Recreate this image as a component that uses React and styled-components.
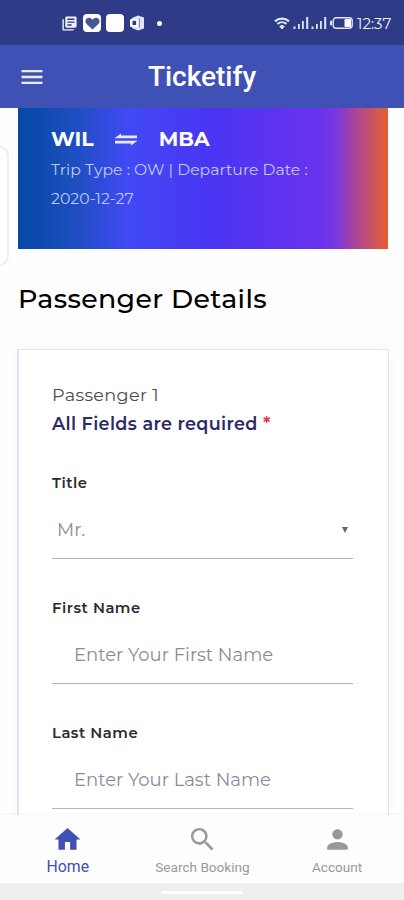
import React from "react";
import styled, { createGlobalStyle, ThemeProvider } from "styled-components";
import {
  MdHome,
  MdSearch,
  MdPerson,
  MdMenu,
  MdLibraryBooks,
} from "react-icons/md";

const theme = {
  colors: {
    statusBar: "#2e3b87",
    primary: "#3f51b5",
    navy: "#2b2968",
    grey: "#999999",
    placeholder: "#8b8b9b",
    cardBorder: "#e4e3f6",
    danger: "#dc3545",
  },
};

const GlobalStyle = createGlobalStyle`
  * {
    box-sizing: border-box;
  }
  body {
    margin: 0;
    background: #fefefe;
    font-family: Montserrat, Inter, sans-serif;
  }
`;

const Screen = styled.div`
  display: flex;
  flex-direction: column;
  width: 404px;
  height: 900px;
  overflow: hidden;
`;

const StatusBar = styled.div`
  display: flex;
  align-items: center;
  justify-content: space-between;
  flex: none;
  height: 45px;
  padding: 1px 12px 0 61px;
  background: ${({ theme }) => theme.colors.statusBar};
  color: #eef0fb;
`;

const StatusGroup = styled.div`
  display: flex;
  align-items: center;
  gap: ${({ $gap }) => $gap};
`;

const Tile = styled.span`
  display: flex;
  align-items: center;
  justify-content: center;
  width: 18px;
  height: 18px;
  border-radius: 4px;
  background: #ffffff;
`;

const Dot = styled.span`
  width: 5px;
  height: 5px;
  margin-left: 7px;
  border-radius: 50%;
  background: #ffffff;
`;

const Clock = styled.span`
  margin-left: 2px;
  width: 35px;
  font-size: 15px;
  white-space: nowrap;
`;

const AppBar = styled.header`
  display: grid;
  grid-template-columns: 64px 1fr 64px;
  align-items: center;
  flex: none;
  height: 63px;
  background: ${({ theme }) => theme.colors.primary};
  color: #ffffff;
`;

const MenuButton = styled.button`
  display: flex;
  justify-content: center;
  padding: 0;
  border: 0;
  background: none;
  color: #eceefb;
`;

const AppTitle = styled.h1`
  margin: 0;
  text-align: center;
  font-family: Roboto, sans-serif;
  font-size: 28px;
  font-weight: 500;
  line-height: 36px;
`;

const Content = styled.main`
  position: relative;
  flex: 1;
  min-height: 0;
  padding: 0 15px 0 17px;
  overflow: hidden;
`;

const SideHandle = styled.div`
  position: absolute;
  left: -20px;
  top: 37px;
  width: 29px;
  height: 122px;
  border: 2px solid #f0f0f0;
  border-radius: 12px;
  background: #ffffff;
`;

const TripBanner = styled.section`
  height: 141px;
  margin: 0 1px;
  padding: 15px 33px 0;
  background: linear-gradient(
    90deg,
    #0648a4 0%,
    #1a4fbc 14%,
    #4149f5 30%,
    #4a35f3 52%,
    #6a32ee 82%,
    #7a38dd 86%,
    #a94599 91%,
    #ca5560 96%,
    #ec5b2c 100%
  );
`;

const Route = styled.div`
  display: flex;
  align-items: center;
  height: 32px;
  padding-bottom: 2px;
  color: #ffffff;
  font-size: 20.5px;
  font-weight: 700;

  svg {
    margin: 3px 21px 0 20px;
  }
`;

const TripInfo = styled.p`
  margin: 0;
  color: #c0c8fa;
  font-size: 15.7px;
  line-height: 29px;
`;

const Heading = styled.h2`
  margin: 31px 0 32px 1px;
  color: #000000;
  font-size: 26.8px;
  font-weight: 500;
  line-height: 37px;
  letter-spacing: 0.35px;
`;

const Card = styled.section`
  height: 500px;
  padding: 30px 35px 0 34px;
  border: 2px solid ${({ theme }) => theme.colors.cardBorder};
  border-top-width: 1px;
  border-right-width: 1px;
  background: #ffffff;
  box-shadow: 0 0 10px rgba(110, 100, 240, 0.05);
`;

const CardLine = styled.p`
  margin: 0 0 0 -1px;
  color: ${({ $strong, theme }) => ($strong ? theme.colors.navy : "#4c4c4c")};
  font-size: 17.6px;
  font-weight: ${({ $strong }) => ($strong ? 600 : 400)};
  line-height: 29px;
  letter-spacing: 0.35px;
`;

const Required = styled.span`
  color: ${({ theme }) => theme.colors.danger};
`;

const Field = styled.label`
  display: block;
  margin: ${({ $first }) => ($first ? "35px" : "39px")} 0 0 -1px;
`;

const FieldLabel = styled.span`
  display: block;
  color: #2b2b2b;
  font-size: 14.8px;
  font-weight: 600;
  line-height: 20px;
  letter-spacing: 0.5px;
`;

const SelectBox = styled.div`
  display: flex;
  align-items: center;
  justify-content: space-between;
  height: 66px;
  padding: 8px 5px 0 5px;
  border-bottom: 1.5px solid #b4b4b4;
  color: ${({ theme }) => theme.colors.placeholder};
  font-size: 18px;
  font-weight: 400;
`;

const Caret = styled.span`
  width: 0;
  height: 0;
  border: 3.5px solid transparent;
  border-top: 6px solid #62627a;
  border-bottom: 0;
`;

const TextInput = styled.input`
  display: block;
  width: 100%;
  height: 66px;
  padding: 8px 22px 0;
  border: 0;
  border-bottom: 1.5px solid #b4b4b4;
  background: none;
  font-family: inherit;
  font-size: 18px;

  &::placeholder {
    color: ${({ theme }) => theme.colors.placeholder};
    font-weight: 400;
    opacity: 1;
  }
`;

const TabBar = styled.nav`
  display: grid;
  grid-template-columns: repeat(3, 1fr);
  flex: none;
  height: 68px;
  background: #fefefe;
  box-shadow: 0 -1px 2px rgba(0, 0, 0, 0.04);
  z-index: 1;
`;

const Tab = styled.a`
  display: flex;
  flex-direction: column;
  align-items: center;
  padding: 9px 0 0 1px;
  color: ${({ $active, theme }) =>
    $active ? theme.colors.primary : theme.colors.grey};
  font-family: Roboto, sans-serif;
  font-size: ${({ $active }) => ($active ? "15.8px" : "13.6px")};
  line-height: 20px;

  span {
    margin-top: 2px;
  }
`;

const GestureBar = styled.div`
  display: flex;
  justify-content: center;
  align-items: center;
  flex: none;
  height: 17px;
  padding-top: 2px;
  background: #eeeeee;

  &::after {
    content: "";
    width: 82px;
    height: 3px;
    border-radius: 2px;
    background: #ffffff;
  }
`;

const HeartIcon = () => (
  <svg width="15" height="13" viewBox="0 0 15 13">
    <path
      d="M7.5 12.5 1.6 6.9C-1.2 4 1.5.5 4.2.8c1.6.1 2.7 1 3.3 2C8.1 1.8 9.2.9 10.8.8c2.7-.3 5.4 3.2 2.6 6.1z"
      fill="#4a5596"
    />
  </svg>
);

const OfficeIcon = () => (
  <svg width="16" height="16" viewBox="0 0 16 16">
    <path d="M9 0.5 15 2.5v11L9 15.5 3 13V3z" fill="#dfe4f6" />
    <rect x="1" y="4" width="8" height="8" rx="1" fill="#f6f8ff" />
    <rect x="3.5" y="5.8" width="3.6" height="4.2" fill="#2e3b87" />
    <path d="M10.5 3.5v9" stroke="#7984bd" strokeWidth="1" />
  </svg>
);

const WifiIcon = () => (
  <svg width="16" height="13" viewBox="0 0 16 13" fill="none" stroke="#e2e6f8">
    <path d="M1 4.3c4-3.6 10-3.6 14 0" strokeWidth="2.3" />
    <path d="M3.5 7c2.6-2.3 6.4-2.3 9 0" strokeWidth="2.1" />
    <path d="M5.8 9.4c1.3-1.1 3.1-1.1 4.4 0L8 12z" fill="#e2e6f8" />
  </svg>
);

const SignalIcon = () => (
  <svg width="16" height="12" viewBox="0 0 16 12" fill="#dfe3f7">
    <rect x="0.5" y="9.5" width="2" height="2.5" />
    <rect x="5" y="7" width="1.8" height="5" />
    <rect x="9" y="4" width="1.8" height="8" />
    <rect x="13.2" y="0" width="2" height="12" />
  </svg>
);

const BatteryIcon = () => (
  <svg width="23" height="12" viewBox="0 0 23 12">
    <rect x="0" y="3.5" width="2" height="5" rx="1" fill="#e2e6f8" />
    <rect
      x="3.2"
      y="0.8"
      width="19"
      height="10.4"
      rx="3"
      fill="none"
      stroke="#e2e6f8"
      strokeWidth="1.4"
    />
    <rect x="14.5" y="2" width="6.5" height="8" rx="1" fill="#ffffff" />
  </svg>
);

const SwapIcon = () => (
  <svg width="24" height="13" viewBox="0 0 24 13" fill="#e9ecff">
    <path d="M0.5 5.3 7 0.5v2H23v2.8z" />
    <path d="M23.5 7.7 17 12.5v-2H1V7.7z" />
  </svg>
);

const TextField = ({ label, placeholder }) => {
  return (
    <Field>
      <FieldLabel>{label}</FieldLabel>
      <TextInput placeholder={placeholder} />
    </Field>
  );
};

const App = () => {
  return (
    <ThemeProvider theme={theme}>
      <GlobalStyle />
      <Screen>
        <StatusBar>
          <StatusGroup $gap="5px">
            <MdLibraryBooks size={17} />
            <Tile>
              <HeartIcon />
            </Tile>
            <Tile />
            <OfficeIcon />
            <Dot />
          </StatusGroup>
          <StatusGroup $gap="2.5px">
            <WifiIcon />
            <SignalIcon />
            <SignalIcon />
            <BatteryIcon />
            <Clock>12:37</Clock>
          </StatusGroup>
        </StatusBar>

        <AppBar>
          <MenuButton>
            <MdMenu size={28} />
          </MenuButton>
          <AppTitle>Ticketify</AppTitle>
        </AppBar>

        <Content>
          <SideHandle />
          <TripBanner>
            <Route>
              WIL
              <SwapIcon />
              MBA
            </Route>
            <TripInfo>
              Trip Type : OW | Departure Date :<br />
              2020-12-27
            </TripInfo>
          </TripBanner>

          <Heading>Passenger Details</Heading>

          <Card>
            <CardLine>Passenger 1</CardLine>
            <CardLine $strong>
              All Fields are required <Required>*</Required>
            </CardLine>
            <Field $first>
              <FieldLabel>Title</FieldLabel>
              <SelectBox>
                Mr.
                <Caret />
              </SelectBox>
            </Field>
            <TextField label="First Name" placeholder="Enter Your First Name" />
            <TextField label="Last Name" placeholder="Enter Your Last Name" />
          </Card>
        </Content>

        <TabBar>
          <Tab $active>
            <MdHome size={31} />
            <span>Home</span>
          </Tab>
          <Tab>
            <MdSearch size={31} />
            <span>Search Booking</span>
          </Tab>
          <Tab>
            <MdPerson size={31} />
            <span>Account</span>
          </Tab>
        </TabBar>
        <GestureBar />
      </Screen>
    </ThemeProvider>
  );
};

export default App;
